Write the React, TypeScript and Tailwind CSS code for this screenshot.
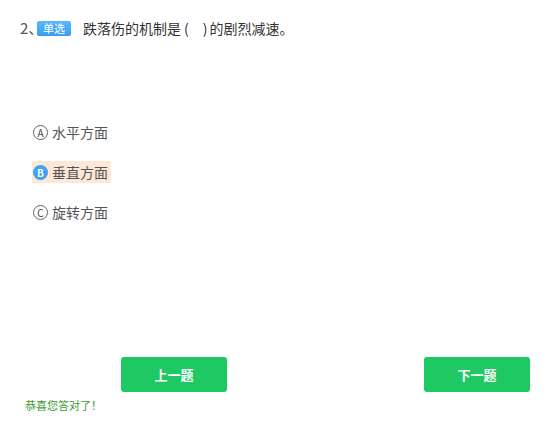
const OPTIONS = [
  { key: 'A', text: '水平方面', selected: false },
  { key: 'B', text: '垂直方面', selected: true },
  { key: 'C', text: '旋转方面', selected: false },
];

export default function App() {
  return (
    <div
      className="w-[558px] h-[443px] bg-white flex flex-col"
      style={{ fontFamily: '"Microsoft YaHei", "Noto Sans CJK SC", sans-serif' }}
    >
      <div className="flex items-center pl-[20px] pt-[19px] text-[14px] leading-[18px]">
        <span className="w-[17px] whitespace-nowrap text-[#555] text-[15px]">2、</span>
        <span className="h-[15px] px-[6px] rounded-[2px] bg-gradient-to-b from-[#5ab8fb] to-[#3a9cf0] text-white text-[11px] leading-[15px]">
          单选
        </span>
        <span className="ml-[12px] text-[#333] flex items-center whitespace-nowrap">
          跌落伤的机制是
          <span className="ml-[3px]">(</span>
          <span className="inline-block w-[14px]" />
          <span>)</span>
          <span className="ml-[2px]">的剧烈减速。</span>
        </span>
      </div>

      <div className="flex flex-col gap-[18px] pl-[32px] mt-[84px]">
        {OPTIONS.map((o) => (
          <div key={o.key} className="flex">
            <div
              className={`flex items-center h-[22px] pl-[1px] pr-[3px] gap-[4px] ${o.selected ? 'bg-[#fde7d6]' : ''}`}
            >
              {o.selected ? (
                <span className="w-[15px] h-[15px] rounded-full bg-[#3fa3f3] text-white text-[10px] font-bold leading-[15px] text-center">
                  {o.key}
                </span>
              ) : (
                <span className="w-[15px] h-[15px] rounded-full border border-[#666] text-[#444] text-[10px] leading-[13px] text-center">
                  {o.key}
                </span>
              )}
              <span className="text-[14px] text-[#555]">{o.text}</span>
            </div>
          </div>
        ))}
      </div>

      <div className="flex justify-between pl-[121px] pr-[28px] mt-[134px]">
        <button className="w-[106px] h-[35px] rounded-[3px] bg-[#1ec863] text-white text-[13px] font-bold">
          上一题
        </button>
        <button className="w-[106px] h-[35px] rounded-[3px] bg-[#1ec863] text-white text-[13px] font-bold">
          下一题
        </button>
      </div>

      <div className="pl-[25px] mt-[5px] text-[11px] text-[#3c9a2e]">恭喜您答对了！</div>
    </div>
  );
}
